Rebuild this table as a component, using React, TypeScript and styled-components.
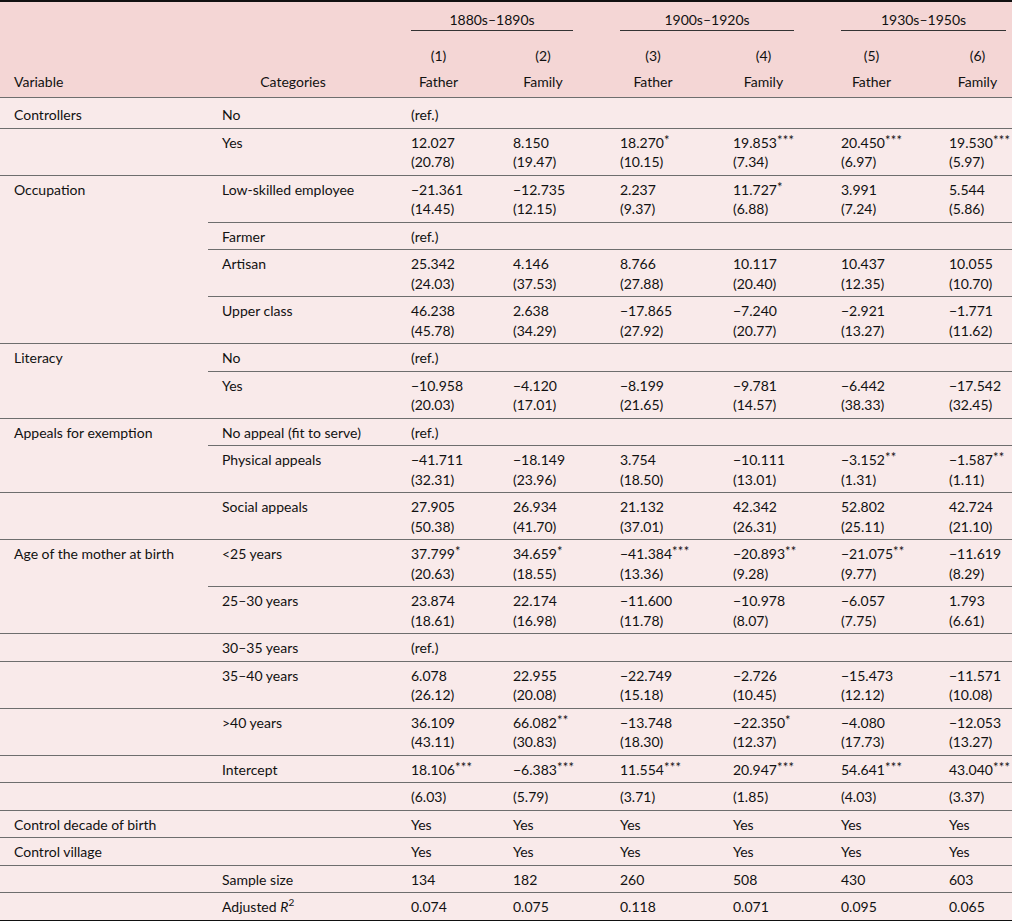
import React from "react";
import styled, { createGlobalStyle, css } from "styled-components";

const GlobalStyle = createGlobalStyle`
  html, body { margin: 0; padding: 0; background: #f9eaea; }
  body { font-family: Lato, "Noto Sans", sans-serif; color: #111; }
`;

const COLS = "208px 189px 102px 107px 113px 108px 108px 77px";
const SUBCOLS = "189px 102px 107px 113px 108px 108px 77px";
const LINE = "#6e6e6e";

const Table = styled.div`
  width: 1012px;
  border-top: 2px solid #111;
  border-bottom: 2px solid #111;
  font-size: 14px;
  line-height: 19.5px;
`;

const Head = styled.div`
  display: grid;
  grid-template-columns: ${COLS};
  grid-template-rows: auto auto auto;
  padding: 8px 0 5px;
  background: #f4d6d5;
  border-bottom: 1px solid ${LINE};
`;

const HeadCell = styled.div<{ $col: number; $row: number; $align?: string; $last?: boolean }>`
  grid-column: ${(p) => p.$col};
  grid-row: ${(p) => p.$row};
  padding: 0 ${(p) => (p.$last ? 6 : 33)}px 0 14px;
  text-align: ${(p) => p.$align || "center"};
  line-height: 20px;
  ${(p) => p.$row === 2 && css`margin-top: 15px;`}
  ${(p) => p.$row === 3 && css`margin-top: 6px;`}
`;

const GroupHead = styled.div<{ $col: number; $last?: boolean }>`
  grid-column: ${(p) => p.$col} / span 2;
  grid-row: 1;
  padding: 0 ${(p) => (p.$last ? 6 : 33)}px 0 14px;
`;

const GroupTitle = styled.div`
  text-align: center;
  line-height: 20px;
  border-bottom: 1px solid #333;
`;

const Group = styled.div<{ $final?: boolean }>`
  display: grid;
  grid-template-columns: 208px 804px;
  border-bottom: ${(p) => (p.$final ? "none" : `1px solid ${LINE}`)};
`;

const VarCell = styled.div<{ $first?: boolean }>`
  padding: ${(p) => (p.$first ? 7 : 4)}px 6px 3px 14px;
  white-space: nowrap;
`;

const SubRows = styled.div`
  display: flex;
  flex-direction: column;
`;

const SubRow = styled.div<{ $divided?: boolean; $first?: boolean }>`
  display: grid;
  grid-template-columns: ${SUBCOLS};
  padding: ${(p) => (p.$first ? 7 : 4)}px 0 3px;
  border-bottom: ${(p) => (p.$divided ? `1px solid ${LINE}` : "none")};
`;

const Cell = styled.div<{ $last?: boolean }>`
  padding: 0 ${(p) => (p.$last ? 4 : 8)}px 0 14px;
  white-space: nowrap;
`;

const Line = styled.div``;

const Stars = styled.sup`
  font-size: 13px;
  line-height: 0;
  vertical-align: 3px;
  letter-spacing: 0.3px;
`;

const Ital = styled.i`
  font-style: italic;
`;

const Super = styled.sup`
  font-size: 10px;
  line-height: 0;
`;

type Val = string | [string, string];
type Row = { cat: React.ReactNode; vals: Val[] };
type Grp = { variable: string; rows: Row[] };

const Num: React.FC<{ s: string }> = ({ s }) => {
  const m = s.match(/^(.*?)(\*+)$/);
  if (m) {
    return (
      <>
        {m[1]}
        <Stars>{m[2]}</Stars>
      </>
    );
  }
  return <>{s}</>;
};

const REF: Val[] = ["(ref.)"];
const six = (v: string): Val[] => [v, v, v, v, v, v];

const groups: Grp[] = [
  { variable: "Controllers", rows: [{ cat: "No", vals: REF }] },
  {
    variable: "",
    rows: [
      {
        cat: "Yes",
        vals: [
          ["12.027", "(20.78)"],
          ["8.150", "(19.47)"],
          ["18.270*", "(10.15)"],
          ["19.853***", "(7.34)"],
          ["20.450***", "(6.97)"],
          ["19.530***", "(5.97)"],
        ],
      },
    ],
  },
  {
    variable: "Occupation",
    rows: [
      {
        cat: "Low-skilled employee",
        vals: [
          ["−21.361", "(14.45)"],
          ["−12.735", "(12.15)"],
          ["2.237", "(9.37)"],
          ["11.727*", "(6.88)"],
          ["3.991", "(7.24)"],
          ["5.544", "(5.86)"],
        ],
      },
      { cat: "Farmer", vals: REF },
      {
        cat: "Artisan",
        vals: [
          ["25.342", "(24.03)"],
          ["4.146", "(37.53)"],
          ["8.766", "(27.88)"],
          ["10.117", "(20.40)"],
          ["10.437", "(12.35)"],
          ["10.055", "(10.70)"],
        ],
      },
      {
        cat: "Upper class",
        vals: [
          ["46.238", "(45.78)"],
          ["2.638", "(34.29)"],
          ["−17.865", "(27.92)"],
          ["−7.240", "(20.77)"],
          ["−2.921", "(13.27)"],
          ["−1.771", "(11.62)"],
        ],
      },
    ],
  },
  {
    variable: "Literacy",
    rows: [
      { cat: "No", vals: REF },
      {
        cat: "Yes",
        vals: [
          ["−10.958", "(20.03)"],
          ["−4.120", "(17.01)"],
          ["−8.199", "(21.65)"],
          ["−9.781", "(14.57)"],
          ["−6.442", "(38.33)"],
          ["−17.542", "(32.45)"],
        ],
      },
    ],
  },
  {
    variable: "Appeals for exemption",
    rows: [
      { cat: "No appeal (fit to serve)", vals: REF },
      {
        cat: "Physical appeals",
        vals: [
          ["−41.711", "(32.31)"],
          ["−18.149", "(23.96)"],
          ["3.754", "(18.50)"],
          ["−10.111", "(13.01)"],
          ["−3.152**", "(1.31)"],
          ["−1.587**", "(1.11)"],
        ],
      },
    ],
  },
  {
    variable: "",
    rows: [
      {
        cat: "Social appeals",
        vals: [
          ["27.905", "(50.38)"],
          ["26.934", "(41.70)"],
          ["21.132", "(37.01)"],
          ["42.342", "(26.31)"],
          ["52.802", "(25.11)"],
          ["42.724", "(21.10)"],
        ],
      },
    ],
  },
  {
    variable: "Age of the mother at birth",
    rows: [
      {
        cat: "<25 years",
        vals: [
          ["37.799*", "(20.63)"],
          ["34.659*", "(18.55)"],
          ["−41.384***", "(13.36)"],
          ["−20.893**", "(9.28)"],
          ["−21.075**", "(9.77)"],
          ["−11.619", "(8.29)"],
        ],
      },
      {
        cat: "25–30 years",
        vals: [
          ["23.874", "(18.61)"],
          ["22.174", "(16.98)"],
          ["−11.600", "(11.78)"],
          ["−10.978", "(8.07)"],
          ["−6.057", "(7.75)"],
          ["1.793", "(6.61)"],
        ],
      },
    ],
  },
  { variable: "", rows: [{ cat: "30–35 years", vals: REF }] },
  {
    variable: "",
    rows: [
      {
        cat: "35–40 years",
        vals: [
          ["6.078", "(26.12)"],
          ["22.955", "(20.08)"],
          ["−22.749", "(15.18)"],
          ["−2.726", "(10.45)"],
          ["−15.473", "(12.12)"],
          ["−11.571", "(10.08)"],
        ],
      },
    ],
  },
  {
    variable: "",
    rows: [
      {
        cat: ">40 years",
        vals: [
          ["36.109", "(43.11)"],
          ["66.082**", "(30.83)"],
          ["−13.748", "(18.30)"],
          ["−22.350*", "(12.37)"],
          ["−4.080", "(17.73)"],
          ["−12.053", "(13.27)"],
        ],
      },
    ],
  },
  {
    variable: "",
    rows: [
      {
        cat: "Intercept",
        vals: ["18.106***", "−6.383***", "11.554***", "20.947***", "54.641***", "43.040***"],
      },
    ],
  },
  {
    variable: "",
    rows: [{ cat: "", vals: ["(6.03)", "(5.79)", "(3.71)", "(1.85)", "(4.03)", "(3.37)"] }],
  },
  { variable: "Control decade of birth", rows: [{ cat: "", vals: six("Yes") }] },
  { variable: "Control village", rows: [{ cat: "", vals: six("Yes") }] },
  {
    variable: "",
    rows: [{ cat: "Sample size", vals: ["134", "182", "260", "508", "430", "603"] }],
  },
  {
    variable: "",
    rows: [
      {
        cat: (
          <>
            Adjusted <Ital>R</Ital>
            <Super>2</Super>
          </>
        ),
        vals: ["0.074", "0.075", "0.118", "0.071", "0.095", "0.065"],
      },
    ],
  },
];

const headers = [
  { n: "(1)", label: "Father" },
  { n: "(2)", label: "Family" },
  { n: "(3)", label: "Father" },
  { n: "(4)", label: "Family" },
  { n: "(5)", label: "Father" },
  { n: "(6)", label: "Family" },
];

const periods = ["1880s–1890s", "1900s–1920s", "1930s–1950s"];

export default function App() {
  return (
    <>
      <GlobalStyle />
      <Table>
        <Head>
          {periods.map((p, i) => (
            <GroupHead key={p} $col={3 + i * 2} $last={i === 2}>
              <GroupTitle>{p}</GroupTitle>
            </GroupHead>
          ))}
          {headers.map((h, i) => (
            <HeadCell key={"n" + i} $col={3 + i} $row={2} $last={i === 5}>
              {h.n}
            </HeadCell>
          ))}
          <HeadCell $col={1} $row={3} $align="left">
            Variable
          </HeadCell>
          <HeadCell $col={2} $row={3}>
            Categories
          </HeadCell>
          {headers.map((h, i) => (
            <HeadCell key={"l" + i} $col={3 + i} $row={3} $last={i === 5}>
              {h.label}
            </HeadCell>
          ))}
        </Head>
        {groups.map((g, gi) => (
          <Group key={gi} $final={gi === groups.length - 1}>
            <VarCell $first={gi === 0}>{g.variable}</VarCell>
            <SubRows>
              {g.rows.map((r, ri) => (
                <SubRow key={ri} $divided={ri < g.rows.length - 1} $first={gi === 0 && ri === 0}>
                  <Cell>{r.cat}</Cell>
                  {r.vals.map((v, vi) => (
                    <Cell key={vi} $last={vi === 5}>
                      {typeof v === "string" ? (
                        <Line>
                          <Num s={v} />
                        </Line>
                      ) : (
                        <>
                          <Line>
                            <Num s={v[0]} />
                          </Line>
                          <Line>{v[1]}</Line>
                        </>
                      )}
                    </Cell>
                  ))}
                </SubRow>
              ))}
            </SubRows>
          </Group>
        ))}
      </Table>
    </>
  );
}
